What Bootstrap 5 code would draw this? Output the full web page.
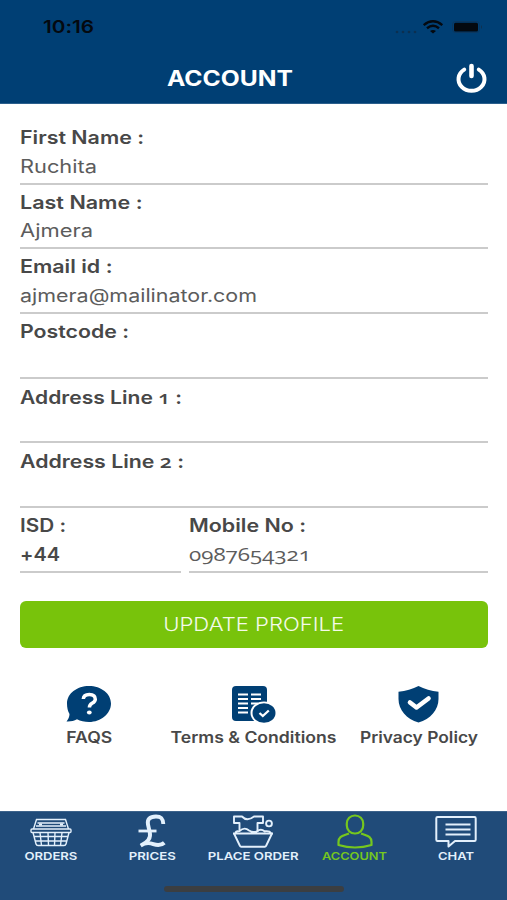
<!DOCTYPE html>
<html lang="en">
<head>
<meta charset="utf-8">
<meta name="viewport" content="width=device-width, initial-scale=1">
<title>Account</title>
<link href="https://cdn.jsdelivr.net/npm/bootstrap@5.3.0/dist/css/bootstrap.min.css" rel="stylesheet">
<style>
  body { font-family: Inter, "Open Sans", sans-serif; font-feature-settings: "calt" 0; color: #484848; background: #fff; overflow: hidden; }
  .screen { width: 507px; height: 900px; }
  .topbar { height: 104px; background: #003f74; border-bottom: 1px solid #2b5f8c; }
  .statusbar { height: 54px; padding: 0 23px 0 43px; color: #04090f; }
  .clock { font-size: 17.5px; font-weight: 600; line-height: 1; }
  .battery { margin-left: 6px; }
  .titlebar { height: 49px; padding: 0 19px 0 167px; }
  .titlebar h1 { font-size: 21px; font-weight: 700; line-height: 1; }
  .titlebar svg { margin-top: -2px; }
  .fit { display: inline-block; white-space: nowrap; transform-origin: left center; }
  .field { height: 64.7px; padding-top: 4px; line-height: 28.6px; border-bottom: 2px solid #cbcbcb; }
  .field-name { font-size: 18px; font-weight: 560; }
  .field-value { font-size: 18px; font-weight: 380; color: #5c5c5c; }
  .oldstyle { font-family: "Open Sans", "Noto Sans", sans-serif; font-feature-settings: "onum" 1; }
  .phone { font-size: 19px; position: relative; top: -1px; }
  .form-area { padding: 16px 19px 0 20px; height: 707px; }
  .isd { width: 161px; }
  .btn-update, .btn-update:hover { height: 47px; margin-top: 28px; background: #78c30b; color: #f4fae9; border: 0; border-radius: 6px; font-size: 18.5px; font-weight: 300; padding: 2px 0 0; }
  .links { margin-top: 37px; font-size: 15.6px; font-weight: 560; line-height: 20px; }
  .links a, .tabs a { color: inherit; text-decoration: none; }
  .links svg { margin-bottom: 5px; color: #003f74; }
  .link-faq { width: 138px; }
  .link-terms { width: 191px; }
  .tabs { height: 89px; background: #204b79; color: #e3f0fc; font-size: 10.8px; font-weight: 560; line-height: 14px; border-top: 1px solid #3d638b; }
  .tabs a { width: 101.4px; padding-top: 1px; }
  .tabs a.current { color: #76c71e; }
  .tabs svg { margin-bottom: 1px; }
  .home-indicator { width: 180px; height: 6px; left: 164px; bottom: 8px; background: #3b3e41; }
</style>
</head>
<body>
<div class="screen d-flex flex-column position-relative">
  <header class="topbar flex-shrink-0">
    <div class="statusbar d-flex align-items-center justify-content-between">
      <div class="clock"><span class="fit" data-w="51">10:16</span></div>
      <div class="d-flex align-items-center">
        <svg class="mt-2" width="24" height="5" viewBox="0 0 24 5" fill="#0c2f50"><circle cx="3" cy="3" r="1.3"/><circle cx="9" cy="3" r="1.3"/><circle cx="15" cy="3" r="1.3"/><circle cx="21" cy="3" r="1.3"/></svg>
        <svg class="ms-1" width="22" height="14" viewBox="0 0 22 14" fill="none" stroke="currentColor" stroke-width="2.4"><path d="M1.700 5.100Q11-2.500 20.300 5.100M5 8.200q6-4.800 12 0"/><path d="M8 11q3-2.200 6 0l-3 2.600z" fill="currentColor" stroke="none"/></svg>
        <svg class="battery" width="34" height="14" viewBox="0 0 34 14"><rect x="2.500" y="1.500" width="27" height="11" rx="3" fill="none" stroke="#0b375f"/><rect x="4" y="2.800" width="24" height="8.600" rx="1.500" fill="#04090f"/><path d="M31 5v4q2-2 0-4" fill="#12304c"/></svg>
      </div>
    </div>
    <div class="titlebar d-flex align-items-center text-white">
      <h1 class="m-0"><span class="fit" data-w="126">ACCOUNT</span></h1>
      <svg class="ms-auto" width="33" height="30" viewBox="0 0 33 30" fill="none" stroke="currentColor" stroke-width="4" stroke-linecap="round"><path d="M9.200 6.600A13 11.600 0 1 0 23.800 6.600"/><path d="M16.500 3v10" stroke-width="4.600"/></svg>
    </div>
  </header>

  <main class="form-area flex-shrink-0">
    <div class="field"><div class="field-name"><span class="fit" data-w="124">First Name :</span></div><div class="field-value"><span class="fit" data-w="77">Ruchita</span></div></div>
    <div class="field"><div class="field-name"><span class="fit" data-w="122.5">Last Name :</span></div><div class="field-value"><span class="fit" data-w="73">Ajmera</span></div></div>
    <div class="field"><div class="field-name"><span class="fit" data-w="92.5">Email id :</span></div><div class="field-value"><span class="fit" data-w="237">ajmera@mailinator.com</span></div></div>
    <div class="field"><div class="field-name"><span class="fit" data-w="109">Postcode :</span></div></div>
    <div class="field"><div class="field-name"><span class="fit" data-w="162">Address Line <span class="oldstyle">1</span> :</span></div></div>
    <div class="field"><div class="field-name"><span class="fit" data-w="164">Address Line <span class="oldstyle">2</span> :</span></div></div>
    <div class="d-flex gap-2">
      <div class="field isd"><div class="field-name"><span class="fit" data-w="46">ISD :</span></div><div class="field-name"><span class="fit" data-w="40">+44</span></div></div>
      <div class="field flex-grow-1"><div class="field-name"><span class="fit" data-w="117">Mobile No :</span></div><div class="field-value oldstyle phone"><span class="fit" data-w="122">0987654321</span></div></div>
    </div>
    <button class="btn btn-update w-100 d-flex align-items-center justify-content-center" type="button"><span class="fit" data-w="181" data-center>UPDATE PROFILE</span></button>

    <div class="links d-flex">
      <a href="#" class="link-faq d-flex flex-column align-items-center">
        <svg width="46" height="38" viewBox="0 0 46 38"><path fill="currentColor" d="M23 1C35 1 45 8.600 45 18.500S35 37 23 37c-4.500 0-8.600-1-12-2.800-3 1.700-6.500 2.400-10.500 2.200 1.800-2 3-4.600 3-7.400C1.800 26 1 22.500 1 18.500 1 8.600 11 1 23 1z"/><path d="M17.300 14q.3-4.600 6-4.600 6 0 6 4.800 0 2.300-3.200 4.100-2.700 1.500-2.700 4.300" fill="none" stroke="#fff" stroke-width="3.500"/><ellipse cx="23.300" cy="27.500" rx="2.400" ry="2.100" fill="#fff"/></svg>
        <span class="fit" data-w="46" data-center>FAQS</span>
      </a>
      <a href="#" class="link-terms d-flex flex-column align-items-center">
        <svg width="44" height="38" viewBox="0 0 44 38"><rect x="0" y="1" width="35" height="35" rx="4" fill="currentColor"/><path d="M6 9.500h10M19 9.500h10M6 14h10M19 14h10M6 18.500h10M19 18.500h7M6 23h10M6 27.500h10" stroke="#fff" stroke-width="2.100"/><ellipse cx="32" cy="28" rx="13.500" ry="11.500" fill="#fff"/><ellipse cx="32" cy="28" rx="11.500" ry="9.800" fill="currentColor"/><path d="m27.500 28 3.300 3 6-5.500" fill="none" stroke="#fff" stroke-width="2.300"/></svg>
        <span class="fit" data-w="166" data-center>Terms &amp; Conditions</span>
      </a>
      <a href="#" class="d-flex flex-column align-items-center flex-grow-1">
        <svg width="42" height="38" viewBox="0 0 42 38"><path fill="currentColor" d="M20.500 1Q29.500 5.500 40.500 6.800V14C40.500 25 32.500 34 20.500 37.500 8.500 34 .5 25 .5 14V6.800Q11.500 5.500 20.500 1z"/><path d="m12 17.500 6.500 5 12-9" fill="none" stroke="#fff" stroke-width="4.600" stroke-linecap="round" stroke-linejoin="round"/></svg>
        <span class="fit" data-w="118" data-center>Privacy Policy</span>
      </a>
    </div>
  </main>

  <nav class="tabs d-flex flex-shrink-0">
    <a href="#" class="d-flex flex-column align-items-center">
      <svg width="42" height="36" viewBox="0 0 42 36" fill="none" stroke="currentColor" stroke-width="1.400"><path d="M3.500 16 6.500 6.500h29L38.500 16M7.500 10h27M6 13h30" /><rect x="1" y="16" width="40" height="3.500" rx="1"/><path d="M3 19.500 6 31q.4 1.500 2 1.500h26q1.600 0 2-1.500l3-11.500M4 23.500h34M5 28h32M10 19.500l1.500 13M18 19.500l.5 13M25 19.500l-.5 13M32 19.500l-1.500 13"/><path d="M9 11.500h3M30 11.500h3" stroke-width="2"/></svg>
      <span class="fit" data-w="53" data-center>ORDERS</span>
    </a>
    <a href="#" class="d-flex flex-column align-items-center">
      <svg width="34" height="36" viewBox="0 0 34 36" fill="none" stroke="currentColor" stroke-width="3.900"><path d="M28.300 11C28 5.300 26 3.500 21 3.500c-6.500 0-9 3.200-8 8l1.800 8c1.200 5-1.500 9.500-9 13 4-2.700 8-3 12.500-1.400s8 1.400 11-1.400"/><path d="M3.500 18h18" stroke-width="2.800"/></svg>
      <span class="fit" data-w="47" data-center>PRICES</span>
    </a>
    <a href="#" class="d-flex flex-column align-items-center">
      <svg width="42" height="36" viewBox="0 0 42 36" fill="none" stroke="currentColor" stroke-width="1.900" stroke-linejoin="round"><path d="M7.500 17V10H2V3.500h8q5 5.500 12 0h9V10H25.500v9"/><circle cx="37" cy="10.500" r="2.900"/><path d="M3.500 20q0-2 4-2 5-4.500 9.500-.5 4 2.500 8 .8 4-3 7.500 0 5-.8 6.500 1.700M1 20.500h40M2 20.500 8 33q.3.800 1.200.8h23.600q.9 0 1.200-.8l6-12.500"/></svg>
      <span class="fit" data-w="91" data-center>PLACE ORDER</span>
    </a>
    <a href="#" class="current d-flex flex-column align-items-center">
      <svg width="36" height="36" viewBox="0 0 36 36" fill="none" stroke="currentColor" stroke-width="2.200"><rect x="9.800" y="2.500" width="16.400" height="18" rx="8"/><path d="M12 20.500C6 23 1.500 23 1.500 29v3q16.500 5 33 0v-3c0-6-4.500-6-10.500-8.500" stroke-linejoin="round"/></svg>
      <span class="fit" data-w="65" data-center>ACCOUNT</span>
    </a>
    <a href="#" class="d-flex flex-column align-items-center">
      <svg width="42" height="36" viewBox="0 0 42 36" fill="none" stroke="currentColor" stroke-width="2" stroke-linejoin="round"><path d="M2.500 4h37q1.200 0 1.200 1.200v21.600q0 1.200-1.200 1.200H20l-6.500 5.500V28h-11q-1.200 0-1.200-1.200V5.200Q1.300 4 2.500 4z"/><path d="M10.500 11.500h25M10.500 16.500h25M10.500 21.500h25"/></svg>
      <span class="fit" data-w="36" data-center>CHAT</span>
    </a>
  </nav>
  <div class="home-indicator position-absolute rounded-pill"></div>
</div>
<script src="https://cdn.jsdelivr.net/npm/bootstrap@5.3.0/dist/js/bootstrap.bundle.min.js"></script>
<script>
  document.querySelectorAll('.fit').forEach(function (el) {
    var s = el.dataset.w / el.getBoundingClientRect().width;
    if (el.hasAttribute('data-center')) el.style.transformOrigin = 'center';
    el.style.transform = 'scaleX(' + s + ')';
  });
</script>
</body>
</html>
